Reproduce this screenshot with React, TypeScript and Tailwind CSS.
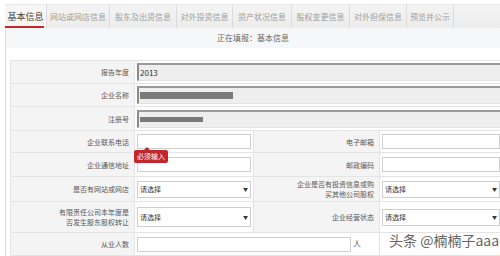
import React from "react";

const font = { fontFamily: '"Noto Sans CJK SC", "Noto Sans", sans-serif' };

const tabs = [
  { t: "基本信息", w: "w-[42px]", active: true },
  { t: "网站或网店信息", w: "w-[63px]" },
  { t: "股东及出资信息", w: "w-[67px]" },
  { t: "对外投资信息", w: "w-[56px]" },
  { t: "资产状况信息", w: "w-[59px]" },
  { t: "股权变更信息", w: "w-[58px]" },
  { t: "对外担保信息", w: "w-[57px]" },
  { t: "预览并公示", w: "w-[47px]" },
];

function Label({ children, h }: { children: React.ReactNode; h?: string }) {
  return (
    <div className={`bg-[#f4f4f4] flex items-center justify-end pr-[5px] text-[7px] leading-[10px] text-[#5a5a5a] text-right ${h ?? ""}`}>
      <div>{children}</div>
    </div>
  );
}

function GrayInput({ children }: { children?: React.ReactNode }) {
  return (
    <div className="bg-white flex items-center pl-[2px] pr-[5px] col-span-3">
      <div className="h-[18px] w-full bg-[#eeeeee] border-t-2 border-l-2 border-t-[#9a9a9a] border-l-[#8a8a8a] border-r border-b border-r-[#e2e2e2] border-b-[#e2e2e2] flex items-center pl-[1px] text-[8px] text-[#333]">
        {children}
      </div>
    </div>
  );
}

function TextInput({ w = "w-full" }: { w?: string }) {
  return <div className={`h-[15px] ${w} bg-white border border-[#cfcfcf]`} />;
}

function Select({ h = "h-[17px]" }: { h?: string }) {
  return (
    <div className={`${h} w-full bg-white border border-[#cfcfcf] flex items-center justify-between px-[2px] text-[7px] text-[#333]`}>
      <span>请选择</span>
      <span className="text-[5px] text-[#333]">▼</span>
    </div>
  );
}

function Val({ children, cls = "" }: { children: React.ReactNode; cls?: string }) {
  return <div className={`bg-white flex items-center pl-[2px] pr-[2px] ${cls}`}>{children}</div>;
}

export default function App() {
  return (
    <div className="w-[500px] h-[256px] overflow-hidden bg-white relative" style={font}>
      <div className="pt-[4px] pl-[5px]">
        {/* tab bar */}
        <div className="h-[24px] flex bg-gradient-to-b from-[#f4f4f4] to-[#ececec] border-t border-[#e6e6e6]">
          {tabs.map((t) => (
            <div
              key={t.t}
              className={`${t.w} shrink-0 flex items-center justify-center border-r border-[#dcdcdc] relative ${
                t.active ? "text-[#444] text-[9px] bg-[#f6f6f6]" : "text-[#a0a0a0] text-[8px]"
              }`}
            >
              {t.t}
              {t.active && <div className="absolute left-0 right-[2px] bottom-0 h-[2px] bg-[#c4262e]" />}
            </div>
          ))}
          <div className="flex-1" />
        </div>
        <div className="border-l border-[#dddddd] h-[228px]">
          <div className="h-[20px] bg-[#f6f7f9] flex items-center justify-center text-[8px] text-[#666]">
            正在填报：基本信息
          </div>
          <div className="pt-[12px] pl-[4px]">
            <div className="relative w-[492px] grid grid-cols-[123px_118px_125px_126px] grid-rows-[22px_22px_23px_21px_23px_24px_30px_22px] gap-px bg-[#e4e4e4] border border-[#e4e4e4]">
              <Label>报告年度</Label>
              <GrayInput>2013</GrayInput>
              <Label>企业名称</Label>
              <GrayInput>
                <div className="w-[93px] h-[7px] bg-[#7a7a7a]" />
              </GrayInput>
              <Label>注册号</Label>
              <GrayInput>
                <div className="w-[63px] h-[5px] bg-[#7a7a7a]" />
              </GrayInput>

              <Label>企业联系电话</Label>
              <Val><TextInput /></Val>
              <Label>电子邮箱</Label>
              <Val cls="pr-[6px]"><TextInput /></Val>

              <Label>企业通信地址</Label>
              <Val><TextInput /></Val>
              <Label>邮政编码</Label>
              <Val cls="pr-[6px]"><TextInput /></Val>

              <Label>是否有网站或网店</Label>
              <Val><Select /></Val>
              <Label>
                企业是否有投资信息或购
                <br />
                买其他公司股权
              </Label>
              <Val cls="pr-[6px]"><Select /></Val>

              <Label>
                有限责任公司本年度是
                <br />
                否发生股东股权转让
              </Label>
              <Val><Select h="h-[20px]" /></Val>
              <Label>企业经营状态</Label>
              <Val cls="pr-[6px]"><Select /></Val>

              <Label>从业人数</Label>
              <Val cls="col-span-2 gap-[2px]">
                <TextInput w="w-[214px]" />
                <span className="text-[8px] text-[#555]">人</span>
              </Val>
              <Val cls="col-span-1"><span /></Val>

              {/* tooltip */}
              <div className="absolute left-[123px] top-[89px] h-[13px] px-[3px] bg-[#c4262e] rounded-[2px] text-white text-[7px] flex items-center">
                必须输入
                <div className="absolute left-[10px] -top-[3px] w-0 h-0 border-l-[3px] border-r-[3px] border-b-[3px] border-l-transparent border-r-transparent border-b-[#c4262e]" />
              </div>
            </div>
          </div>
        </div>
      </div>
      {/* watermark */}
      <div className="absolute left-[389px] top-[231px] text-[14px] leading-[18px] text-[#666] whitespace-nowrap" style={{ textShadow: "0 0 2px #fff" }}>
        头条 @楠楠子aaa
      </div>
    </div>
  );
}
